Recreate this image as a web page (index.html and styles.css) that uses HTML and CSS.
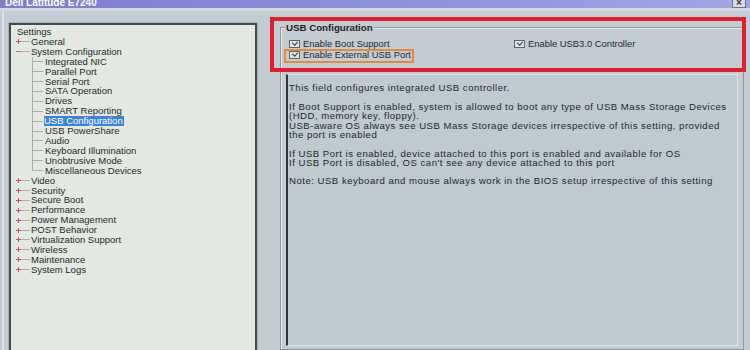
FILE: index.html
```html
<!DOCTYPE html>
<html lang="en">
<head>
  <meta charset="UTF-8">
  <title>Dell Latitude E7240 | BIOS Setup</title>
  <link rel="stylesheet" href="styles.css">
</head>
<body>
  <div class="titlebar">
    <span class="title-text">Dell Latitude E7240</span>
    <span class="close-btn">&#215;</span>
  </div>
  <div class="title-band"></div>

  <div class="main">
    <div class="tree">
      <div class="node root">Settings</div>
      <div class="node top"><span class="exp plus"></span><span class="tick"></span>General</div>
      <div class="node top"><span class="exp minus"></span><span class="tick"></span>System Configuration</div>
      <div class="children">
        <div class="node child">Integrated NIC</div>
        <div class="node child">Parallel Port</div>
        <div class="node child">Serial Port</div>
        <div class="node child">SATA Operation</div>
        <div class="node child">Drives</div>
        <div class="node child">SMART Reporting</div>
        <div class="node child"><span class="selected">USB Configuration</span></div>
        <div class="node child">USB PowerShare</div>
        <div class="node child">Audio</div>
        <div class="node child">Keyboard Illumination</div>
        <div class="node child">Unobtrusive Mode</div>
        <div class="node child last">Miscellaneous Devices</div>
      </div>
      <div class="node top"><span class="exp plus"></span><span class="tick"></span>Video</div>
      <div class="node top"><span class="exp plus"></span><span class="tick"></span>Security</div>
      <div class="node top"><span class="exp plus"></span><span class="tick"></span>Secure Boot</div>
      <div class="node top"><span class="exp plus"></span><span class="tick"></span>Performance</div>
      <div class="node top"><span class="exp plus"></span><span class="tick"></span>Power Management</div>
      <div class="node top"><span class="exp plus"></span><span class="tick"></span>POST Behavior</div>
      <div class="node top"><span class="exp plus"></span><span class="tick"></span>Virtualization Support</div>
      <div class="node top"><span class="exp plus"></span><span class="tick"></span>Wireless</div>
      <div class="node top"><span class="exp plus"></span><span class="tick"></span>Maintenance</div>
      <div class="node top"><span class="exp plus"></span><span class="tick"></span>System Logs</div>
    </div>

    <div class="pane">
      <div class="group">
        <div class="group-title">USB Configuration</div>
        <div class="checks">
          <label class="check"><span class="box"></span>Enable Boot Support</label>
          <label class="check"><span class="box"></span>Enable USB3.0 Controller</label>
          <label class="check"><span class="box"></span>Enable External USB Port</label>
        </div>
        <div class="desc">
          <p>This field configures integrated USB controller.</p>
          <p>If Boot Support is enabled, system is allowed to boot any type of USB Mass Storage Devices<br>
          (HDD, memory key, floppy).<br>
          USB-aware OS always see USB Mass Storage devices irrespective of this setting, provided<br>
          the port is enabled</p>
          <p>If USB Port is enabled, device attached to this port is enabled and available for OS<br>
          If USB Port is disabled, OS can't see any device attached to this port</p>
          <p>Note: USB keyboard and mouse always work in the BIOS setup irrespective of this setting</p>
        </div>
      </div>

      <!-- screenshot annotations -->
      <div class="mark-red"></div>
      <div class="mark-orange"></div>
    </div>
  </div>
</body>
</html>
```

FILE: styles.css
```css
body {
  margin: 0;
  width: 750px;
  height: 350px;
  overflow: hidden;
  background: #c3ccd3;
  font-family: 'Liberation Sans', Arial, sans-serif;
  color: #262a2c;
}

.titlebar {
  height: 8px;
  overflow: hidden;
  display: flex;
  justify-content: space-between;
  background: linear-gradient(90deg, #7c7cce, #9194dc 60%, #a3a6e4);
}

.title-text {
  display: block;
  margin: -3px 0 0 5px;
  font-size: 10px;
  line-height: 11px;
  font-weight: bold;
  color: #fff;
}

.close-btn {
  width: 12px;
  height: 7px;
  margin-right: 4px;
  border: 1px solid #6d7080;
  border-top: none;
  background: #d9dce6;
  color: #333;
  font-size: 10px;
  line-height: 6px;
  text-align: center;
  font-weight: bold;
}

.title-band {
  height: 3px;
  background: #d3d7e6;
}

.main {
  display: flex;
  align-items: flex-start;
  height: 339px;
  background: linear-gradient(90deg, transparent 2px, #dde3e8 2px, #dde3e8 4px, transparent 4px);
}

/* settings tree */

.tree {
  margin: 12px 0 0 9px;
  width: 248px;
  height: 340px;
  flex-shrink: 0;
  padding: 2px 0 0 4px;
  box-sizing: border-box;
  background: #e3e8e1;
  border: 2px solid #464b4f;
  box-shadow: 0 0 0 1px #a9b2b8;
  font-size: 9.5px;
}

.node {
  display: flex;
  align-items: center;
  height: 9.92px;
  line-height: 9.92px;
  white-space: nowrap;
}

.root {
  padding-left: 2px;
}

.exp {
  width: 5px;
  height: 5px;
  margin-left: 1px;
  flex-shrink: 0;
  background-repeat: no-repeat;
}

.exp.plus {
  background-image:
    linear-gradient(#cf4a5e, #cf4a5e),
    linear-gradient(#cf4a5e, #cf4a5e);
  background-size: 5px 1px, 1px 5px;
  background-position: 0 2px, 2px 0;
}

.exp.minus {
  background-image: linear-gradient(#d6687a, #d6687a);
  background-size: 5px 1px;
  background-position: 0 2px;
}

.tick {
  width: 9px;
  height: 1px;
  margin-right: 1px;
  background: #aab0ac;
}

.children {
  margin-left: 17px;
}

.child {
  padding-left: 13px;
  background:
    linear-gradient(#aab0ac, #aab0ac) no-repeat 0 0 / 1px 100%,
    linear-gradient(#aab0ac, #aab0ac) no-repeat 0 50% / 11px 1px;
}

.child.last {
  background:
    linear-gradient(#aab0ac, #aab0ac) no-repeat 0 0 / 1px 50%,
    linear-gradient(#aab0ac, #aab0ac) no-repeat 0 50% / 11px 1px;
}

.selected {
  background: #3c83d6;
  color: #fff;
  padding: 0 1px 0 0;
  margin-left: -1px;
}

/* right pane */

.pane {
  position: relative;
  flex: 1;
  height: 339px;
}

.group {
  display: flex;
  flex-direction: column;
  margin: 16px 6px 0 23px;
  height: 323px;
  box-sizing: border-box;
  border: 1px solid #8d979e;
  box-shadow: inset 1px 1px 0 #e6ebee;
}

.group-title {
  align-self: flex-start;
  margin: -5.5px 0 0 4px;
  padding: 0 1px;
  background: #c3ccd3;
  font-size: 9.7px;
  line-height: 10px;
  font-weight: bold;
  color: #222;
}

.checks {
  display: grid;
  grid-template-columns: 225px auto;
  grid-auto-rows: 11.3px;
  margin: 5.5px 0 0 8px;
  font-size: 9.4px;
}

.check {
  display: flex;
  align-items: center;
  white-space: nowrap;
}

.box {
  position: relative;
  width: 9px;
  height: 6px;
  margin-right: 3px;
  border: 1px solid #5f666b;
  background: #dfe3e5;
}

.box::after {
  content: "";
  position: absolute;
  left: 3px;
  top: -0.5px;
  width: 2.5px;
  height: 4px;
  border: solid #2a2e30;
  border-width: 0 1.5px 1.5px 0;
  transform: rotate(40deg);
}

.desc {
  flex: 1;
  margin: 13.3px 5px 3px 5px;
  padding: 8.6px 0 0 1px;
  background: #bfcad0;
  border-left: 2px solid #2f3438;
  border-top: 1px solid #dde3e7;
  border-right: 1px solid #dde3e7;
  border-bottom: 1px solid #dde3e7;
  font-size: 9.6px;
  letter-spacing: 0.49px;
  line-height: 9.3px;
  color: #23272a;
  white-space: nowrap;
}

.desc p {
  margin: 0 0 9.3px;
}

/* annotation frames drawn over the screenshot */

.mark-red {
  position: absolute;
  left: 13px;
  top: 6px;
  width: 476px;
  height: 55px;
  box-sizing: border-box;
  border: 4px solid #e2202c;
}

.mark-orange {
  position: absolute;
  left: 27px;
  top: 38px;
  width: 130px;
  height: 14px;
  box-sizing: border-box;
  border: 2px solid #ea8838;
}
```
